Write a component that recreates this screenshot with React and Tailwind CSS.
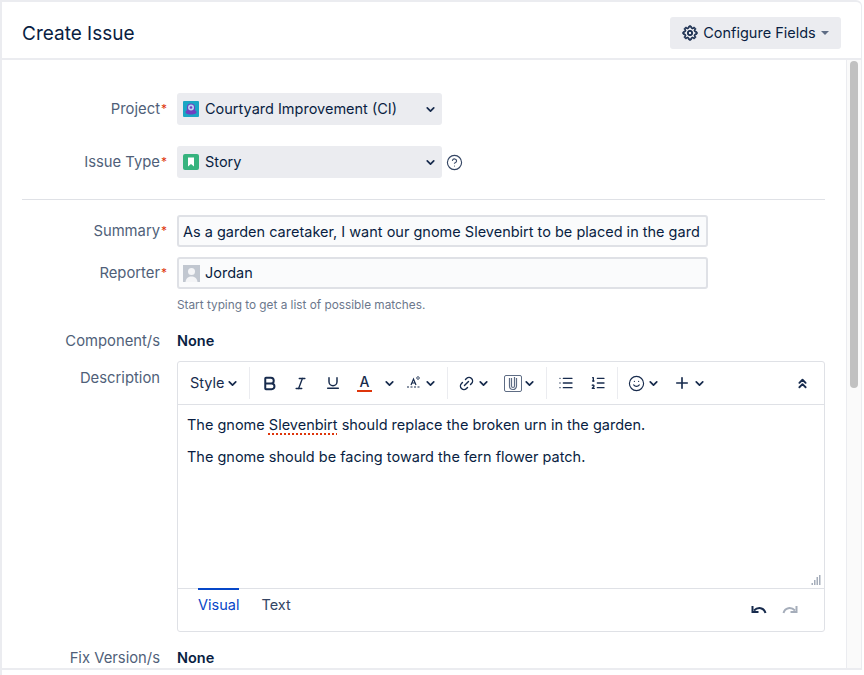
import { ChevronDown, ChevronsUp, Bold, Italic, Underline, Link2, List, ListOrdered, Smile, Plus, HelpCircle } from "lucide-react"
import { GoGear } from "react-icons/go"

function Chev({ className = "" }) {
    return <ChevronDown size={13} strokeWidth={3.2} className={`text-[#172b4d] ${className}`} />
}

function Label({ children, required, className = "" }) {
    return (
        <div className={`w-[158px] shrink-0 text-right text-[14.8px] text-[#505f79] whitespace-nowrap ${className}`}>
            {children}
            {required && <span className="relative inline-block w-0 text-[#de350b] text-[12px] leading-none"><span className="absolute left-[1px] -top-[11px]">*</span></span>}
        </div>
    )
}

function Select({ icon, text }) {
    return (
        <div className="w-[265px] h-[32px] bg-[#ebecf0] rounded-[3px] flex items-center pl-[6px] pr-[5px] text-[14.5px] text-[#091e42]">
            {icon}
            <span className="ml-[6px] flex-1 pb-[1px]">{text}</span>
            <Chev />
        </div>
    )
}

function Sep() {
    return <div className="w-px h-[32px] bg-[#ebecf0]"></div>
}

export default function App() {
    return (
        <div className="h-[675px] w-[864px] bg-white font-['Inter',sans-serif] flex flex-col overflow-hidden">
            <div className="mr-[2px] flex-1 flex flex-col min-h-0 border-t-2 border-l-2 border-r border-[#ebecf0] rounded-tr-[6px]">
                <header className="h-[58px] shrink-0 flex items-center justify-between pl-[20px] pr-[20px] pt-[6px] border-b-2 border-[#ebecf0]">
                    <h1 className="text-[19px] text-[#091e42] pt-[2px]">Create Issue</h1>
                    <button className="h-[32px] w-[171px] bg-[#ebecf0] rounded-[3px] flex items-center justify-center text-[14.5px] text-[#091e42]">
                        <GoGear size={16} className="text-[#172b4d] stroke-[#172b4d] stroke-[1.2]" />
                        <span className="ml-[5px]">Configure Fields</span>
                        <span className="ml-[5px] w-0 h-0 border-x-4 border-x-transparent border-t-4 border-t-[#5e6c84]"></span>
                    </button>
                </header>

                <div className="flex-1 flex min-h-0">
                    <main className="flex-1 min-w-0 overflow-hidden pt-[33px]">
                        <div className="flex items-center h-[32px]">
                            <Label required>Project</Label>
                            <div className="ml-[17px]">
                                <Select
                                    text="Courtyard Improvement (CI)"
                                    icon={
                                        <svg width="16" height="16" viewBox="0 0 16 16">
                                            <rect width="16" height="16" rx="1" fill="#1aa6c4" />
                                            <path d="M2.500 11c0-1 .7-1.500 1.500-1.500V6.500a4 4 0 0 1 8 0v3c.8 0 1.500.5 1.500 1.500 0 1.500-1.500 2.500-5.500 2.500s-5.500-1-5.500-2.500z" fill="#6f42c1" />
                                            <circle cx="8" cy="6.500" r="3" fill="#b9d3f0" />
                                            <circle cx="8" cy="6.500" r="1.300" fill="#6f42c1" />
                                        </svg>
                                    }
                                />
                            </div>
                        </div>
                        <div className="flex items-center h-[32px] mt-[21px]">
                            <Label required>Issue Type</Label>
                            <div className="ml-[17px]">
                                <Select
                                    text="Story"
                                    icon={
                                        <svg width="16" height="16" viewBox="0 0 16 16">
                                            <rect width="16" height="16" rx="2" fill="#36b37e" />
                                            <path d="M5 3.500h6v9l-3-2.500-3 2.500z" fill="#fff" />
                                        </svg>
                                    }
                                />
                            </div>
                            <HelpCircle size={17} strokeWidth={1.6} className="ml-[4px] text-[#344563]" />
                        </div>

                        <div className="h-px bg-[#dfe1e6] ml-[20px] mr-[21px] mt-[21px]"></div>

                        <div className="flex items-center h-[32px] mt-[15px]">
                            <Label required>Summary</Label>
                            <div className="ml-[17px] w-[531px] h-[32px] bg-[#fafbfc] border-2 border-[#dfe1e6] rounded-[3px] flex items-center pl-[4px] pt-[1px] text-[14.5px] text-[#091e42] whitespace-nowrap">
                                As a garden caretaker, I want our gnome Slevenbirt to be placed in the gard
                            </div>
                        </div>
                        <div className="flex items-center h-[32px] mt-[10px]">
                            <Label required>Reporter</Label>
                            <div className="ml-[17px] w-[531px] h-[32px] bg-[#fafbfc] border-2 border-[#dfe1e6] rounded-[3px] flex items-center pl-[4px] text-[14.5px] text-[#091e42]">
                                <svg width="17" height="17" viewBox="0 0 17 17">
                                    <rect width="17" height="17" fill="#c1c7d0" />
                                    <circle cx="8.500" cy="6.500" r="3.500" fill="#f4f5f7" />
                                    <path d="M2.500 17c.5-4 3-5.500 6-5.500s5.500 1.500 6 5.500z" fill="#f4f5f7" />
                                </svg>
                                <span className="ml-[5px] pb-[1px]">Jordan</span>
                            </div>
                        </div>
                        <div className="ml-[175px] mt-[8px] text-[11.800px] leading-[16px] text-[#6b778c]">Start typing to get a list of possible matches.</div>

                        <div className="flex items-center h-[20px] mt-[18px]">
                            <Label>Component/s</Label>
                            <div className="ml-[17px] text-[14.5px] font-semibold text-[#091e42]">None</div>
                        </div>

                        <div className="flex items-start mt-[10px]">
                            <Label className="pt-[6px]">Description</Label>
                            <div className="ml-[17px] w-[648px] h-[271px] border border-[#dfe1e6] rounded-[3px] flex flex-col">
                                <div className="h-[43px] shrink-0 flex items-center border-b border-[#dfe1e6] text-[#172b4d]">
                                    <div className="w-[71px] flex items-center pl-[12px] text-[14.5px]">Style<Chev className="ml-[1px]" /></div>
                                    <Sep />
                                    <div className="w-[197px] flex items-center pl-[12px]">
                                        <Bold size={17} strokeWidth={2.8} className="-ml-[1px]" />
                                        <Italic size={15} strokeWidth={2.2} className="ml-[15px]" />
                                        <Underline size={16} strokeWidth={2.2} className="ml-[17px]" />
                                        <span className="ml-[16px] w-[15px] flex flex-col items-center leading-none">
                                            <span className="text-[14px] leading-[14px] font-medium">A</span>
                                            <span className="w-[15px] h-[2px] bg-[#de350b] mt-[1px]"></span>
                                        </span>
                                        <Chev className="ml-[11px]" />
                                        <svg width="16" height="16" viewBox="0 0 16 16" className="ml-[10px]" fill="none" stroke="currentColor" strokeWidth="1.200">
                                            <path d="M5 10l2.500-6L10 10M6 8h3" />
                                            <circle cx="12" cy="3" r="1.300" strokeWidth="0.800" />
                                            <path d="M1 12h14" strokeDasharray="2 1.500" />
                                        </svg>
                                        <Chev className="ml-[2px]" />
                                    </div>
                                    <Sep />
                                    <div className="w-[98px] flex items-center pl-[10px]">
                                        <Link2 size={17} strokeWidth={2} className="-rotate-45" />
                                        <Chev className="ml-[2px]" />
                                        <svg width="18" height="17" viewBox="0 0 18 17" className="ml-[14px]" fill="none" stroke="#5e6c84" strokeWidth="1">
                                            <rect x=".5" y=".5" width="17" height="16" rx="1.500" />
                                            <path d="M5.500 3v8a3.500 3.500 0 0 0 7 0V3M7.500 3v8a1.500 1.500 0 0 0 3 0V2" strokeWidth="1.200" />
                                        </svg>
                                        <Chev className="ml-[1px]" />
                                    </div>
                                    <Sep />
                                    <div className="w-[70px] flex items-center pl-[11px]">
                                        <List size={16} strokeWidth={2} />
                                        <ListOrdered size={16} strokeWidth={2} className="ml-[16px]" />
                                    </div>
                                    <Sep />
                                    <div className="flex items-center pl-[10px]">
                                        <Smile size={17} strokeWidth={1.6} />
                                        <Chev className="ml-[2px]" />
                                        <Plus size={18} strokeWidth={2.2} className="ml-[13px]" />
                                        <Chev className="ml-[2px]" />
                                    </div>
                                    <ChevronsUp size={15} strokeWidth={3} className="ml-auto mr-[14px]" />
                                </div>
                                <div className="relative flex-1 px-[9px] pt-[10px] text-[14.5px] leading-[20px] text-[#091e42]">
                                    <p>The gnome <span className="underline decoration-dotted decoration-[#de350b] decoration-2 underline-offset-[3px]">Slevenbirt</span> should replace the broken urn in the garden.</p>
                                    <p className="mt-[12px]">The gnome should be facing toward the fern flower patch.</p>
                                    <svg width="12" height="12" viewBox="0 0 12 12" className="absolute right-[2px] bottom-[2px]" fill="#a5adba">
                                        <rect x="9" y="1" width="1.500" height="10" />
                                        <rect x="6.500" y="3" width="1.500" height="8" />
                                        <rect x="4" y="6" width="1.500" height="5" />
                                        <rect x="1.500" y="9" width="1.500" height="2" />
                                    </svg>
                                </div>
                                <div className="h-[43px] shrink-0 border-t border-[#dfe1e6] flex pl-[20px] text-[14.5px]">
                                    <div className="relative h-[30px] pt-[5px] text-[#0747c8]">
                                        <span className="absolute left-0 right-0 -top-[1px] h-[2px] bg-[#0747c8]"></span>
                                        Visual
                                    </div>
                                    <div className="ml-[22px] pt-[5px] text-[#344563]">Text</div>
                                    <div className="ml-auto mr-[26px] flex items-center h-[40px] gap-[15px]">
                                        <svg width="16" height="12" viewBox="0 0 16 12" fill="none" stroke="#172b4d" strokeWidth="2">
                                            <path d="M14.500 10C13 4.500 7 3.500 3 7.500" />
                                            <path d="M1.500 3v6h6" strokeWidth="2" />
                                        </svg>
                                        <svg width="16" height="12" viewBox="0 0 16 12" fill="none" stroke="#a5adba" strokeWidth="2">
                                            <path d="M1.500 10C3 4.500 9 3.500 13 7.500" />
                                            <path d="M14.500 3v6h-6" strokeWidth="2" />
                                        </svg>
                                    </div>
                                </div>
                            </div>
                        </div>

                        <div className="flex items-center h-[20px] mt-[16px]">
                            <Label>Fix Version/s</Label>
                            <div className="ml-[17px] text-[14.5px] font-semibold text-[#091e42]">None</div>
                        </div>
                    </main>
                    <div className="w-[15px] shrink-0 border-l border-[#ebecf0] bg-[#fafafa] pt-[1px] pl-[3px]">
                        <div className="w-[8px] h-[327px] rounded-full bg-[#c1c1c1]"></div>
                    </div>
                </div>
            </div>
            <div className="h-[7px] shrink-0 border-t-2 border-[#ebecf0] border-l-2 mr-[2px]"></div>
        </div>
    )
}
